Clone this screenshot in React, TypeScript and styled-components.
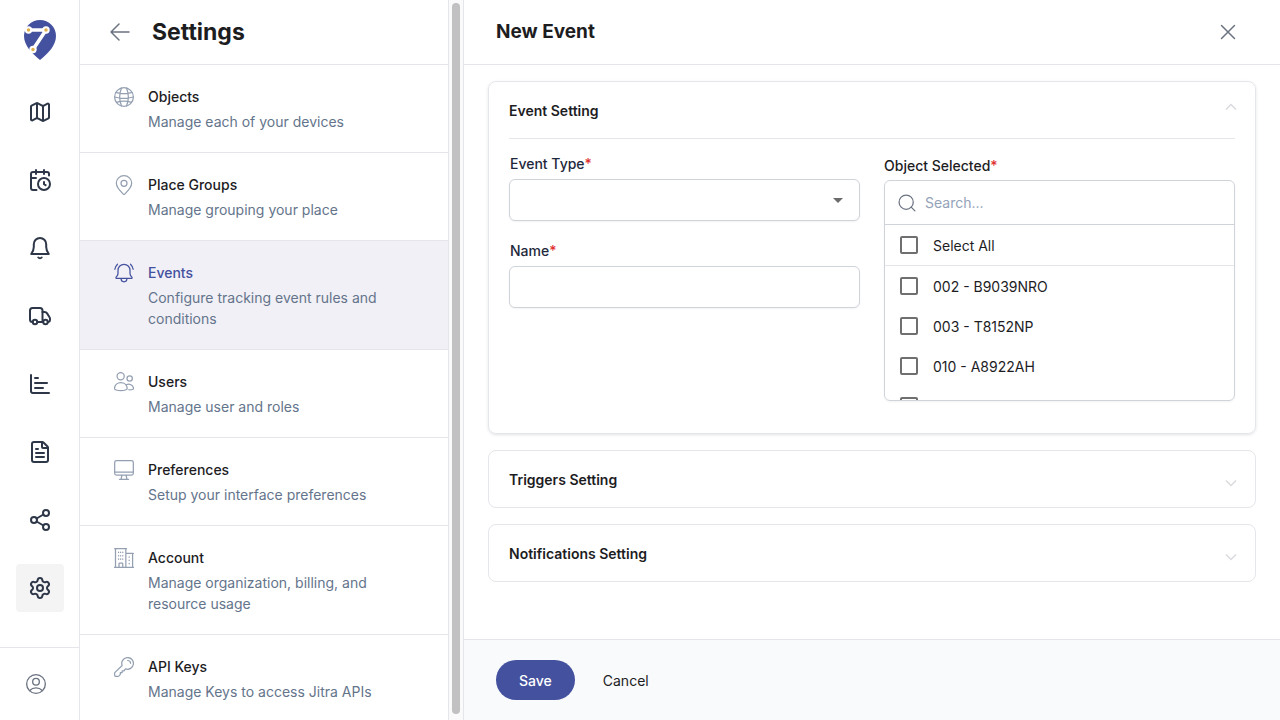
import React from "react";
import styled, { createGlobalStyle } from "styled-components";
import { CalendarClock, ChartBar, FileText, Map, Settings, Share2 } from "lucide-react";

const brand = "#44519e";
const line = "#e4e6ea";
const ink = "#1d1d1f";

const GlobalStyle = createGlobalStyle`
  *, *::before, *::after { box-sizing: border-box; }
  body { margin: 0; background: #fff; }
  body, button, input, select {
    font-family: Inter, "Liberation Sans", sans-serif;
    font-size: 14px;
    color: ${ink};
  }
  h1, h2, h3, p { margin: 0; }
  a { text-decoration: none; color: inherit; }
  button { border: 0; background: none; padding: 0; cursor: pointer; }
`;

const Shell = styled.div`
  display: flex;
  height: 100vh;
  overflow: hidden;
`;

/* Navigation rail */
const Rail = styled.nav`
  display: flex;
  flex-direction: column;
  flex: none;
  width: 80px;
  border-right: 1px solid ${line};
`;
const LogoLink = styled.a`
  display: flex;
  padding: 20px 0 0 24px;
  height: 88px;
  flex: none;
`;
const RailList = styled.div`
  display: flex;
  flex-direction: column;
  gap: 20px;
  padding-left: 16px;
  flex: 1;
`;
const RailLink = styled.a<{ $active?: boolean }>`
  display: flex;
  align-items: center;
  justify-content: center;
  width: 48px;
  height: 48px;
  border-radius: 4px;
  color: #2d3748;
  background: ${(p) => (p.$active ? "#f4f4f5" : "transparent")};
`;
const RailFooter = styled.div`
  display: flex;
  align-items: center;
  padding-left: 26px;
  height: 73px;
  flex: none;
  border-top: 1px solid ${line};
  color: #5f6673;
`;
const IconButton = styled.button`
  display: flex;
  align-items: center;
  justify-content: center;
  color: #6b7280;
`;

/* Settings list */
const Sidebar = styled.aside`
  display: flex;
  flex: none;
  width: 384px;
  border-right: 1px solid ${line};
`;
const SidebarBody = styled.div`
  flex: 1;
  min-width: 0;
  overflow: hidden;
  border-right: 1px solid ${line};
`;
const ScrollTrack = styled.div`
  width: 14px;
  padding: 3px 3px 6px;
  background: #fafafa;
  display: flex;
`;
const ScrollThumb = styled.div`
  flex: 1;
  border-radius: 4px;
  background: #c1c1c1;
`;
const SidebarHeader = styled.header`
  display: flex;
  align-items: center;
  gap: 20px;
  height: 65px;
  padding: 0 28px;
  border-bottom: 1px solid ${line};
`;
const SidebarTitle = styled.h1`
  font-size: 23px;
  line-height: 32px;
  font-weight: 700;
`;
const SettingLink = styled.a<{ $active?: boolean }>`
  display: flex;
  gap: 12px;
  padding: 20px 32px;
  border-bottom: 1px solid ${line};
  background: ${(p) => (p.$active ? "#f1f0f6" : "#fff")};
  color: ${(p) => (p.$active ? brand : "#94a0b2")};
`;
const SettingIcon = styled.span`
  display: flex;
  align-items: center;
  justify-content: center;
  flex: none;
  width: 24px;
  height: 24px;
`;
const SettingText = styled.span`
  display: flex;
  flex-direction: column;
  gap: 2px;
`;
const SettingName = styled.span<{ $active?: boolean }>`
  line-height: 24px;
  font-weight: 500;
  color: ${(p) => (p.$active ? brand : ink)};
`;
const SettingNote = styled.span`
  line-height: 21px;
  color: #64748b;
`;

/* Event form */
const Panel = styled.main`
  display: flex;
  flex-direction: column;
  flex: 1;
  min-width: 0;
`;
const PanelHeader = styled.header`
  display: flex;
  align-items: center;
  justify-content: space-between;
  flex: none;
  height: 65px;
  padding: 0 40px 0 32px;
  border-bottom: 1px solid ${line};
`;
const PanelTitle = styled.h2`
  font-size: 19px;
  line-height: 28px;
  font-weight: 700;
`;
const PanelBody = styled.div`
  display: flex;
  flex-direction: column;
  gap: 16px;
  flex: 1;
  min-height: 0;
  padding: 16px 24px;
`;
const Card = styled.section<{ $open?: boolean }>`
  border: 1px solid ${line};
  border-radius: 8px;
  padding: 0 20px;
  box-shadow: ${(p) => (p.$open ? "0 1px 3px rgba(15, 23, 42, 0.12)" : "none")};
`;
const CardToggle = styled.button`
  display: flex;
  align-items: center;
  justify-content: space-between;
  width: 100%;
  height: 56px;
  font-weight: 600;
`;
const ChevronSlot = styled.span<{ $open?: boolean }>`
  display: flex;
  width: 12px;
  margin-right: -2px;
  padding: ${(p) => (p.$open ? "0 0 6px" : "8px 0 0")};
  color: #d9dbdf;
`;
const FormGrid = styled.div`
  display: grid;
  grid-template-columns: 1fr 1fr;
  gap: 24px;
  border-top: 1px solid ${line};
  padding: 15px 0 32px;
`;
const FieldStack = styled.div`
  display: flex;
  flex-direction: column;
  gap: 20px;
`;
const Field = styled.div`
  display: flex;
  flex-direction: column;
  gap: 6px;
`;
const Label = styled.label`
  padding-left: 1px;
  line-height: 19px;
  font-weight: 500;
  color: #1e293b;
`;
const Required = styled.span`
  color: #e03131;
`;
const TextInput = styled.input`
  width: 100%;
  height: 42px;
  padding: 0 12px;
  border: 1px solid #cfd3da;
  border-radius: 6px;
  background: #fff;
  outline: none;
  box-shadow: 0 1px 2px rgba(15, 23, 42, 0.05);
`;
const SelectWrap = styled.div`
  position: relative;
`;
const SelectInput = styled(TextInput).attrs({ as: "select" })`
  display: block;
  appearance: none;
`;
const SelectArrow = styled.svg`
  position: absolute;
  right: 17px;
  top: 19px;
  pointer-events: none;
`;
const ObjectField = styled.fieldset`
  display: flex;
  flex-direction: column;
  gap: 2px;
  min-width: 0;
  margin: 0;
  padding: 0;
  border: 0;
`;
const ObjectLabel = styled.label`
  line-height: 24px;
  font-weight: 500;
`;
const Picker = styled.div`
  border: 1px solid #cfd3da;
  border-radius: 6px;
  overflow: hidden;
  box-shadow: 0 1px 2px rgba(15, 23, 42, 0.05);
`;
const SearchRow = styled.div`
  display: flex;
  align-items: center;
  gap: 8px;
  height: 44px;
  padding: 0 12px;
  border-bottom: 1px solid #cfd3da;
  color: #6b7280;
`;
const SearchInput = styled.input`
  flex: 1;
  min-width: 0;
  border: 0;
  padding: 0;
  outline: none;
  background: none;
  &::placeholder { color: #94a3b8; opacity: 1; }
`;
const Option = styled.label<{ $divided?: boolean }>`
  display: flex;
  align-items: center;
  gap: 15px;
  height: ${(p) => (p.$divided ? 41 : 40)}px;
  padding: 0 15px;
  border-bottom: ${(p) => (p.$divided ? `1px solid ${line}` : "0")};
`;
const Tick = styled.input`
  appearance: none;
  flex: none;
  width: 18px;
  height: 18px;
  margin: 0;
  border: 2px solid #6f6f6f;
  border-radius: 2px;
  &:checked { background: ${brand}; }
`;
const OptionList = styled.div`
  height: 134px;
  overflow: hidden;
`;
const PanelFooter = styled.footer`
  display: flex;
  align-items: center;
  gap: 16px;
  flex: none;
  padding: 20px 32px;
  border-top: 1px solid ${line};
  background: #f8fafc;
`;
const SaveButton = styled.button`
  height: 40px;
  padding: 0 23px;
  border-radius: 20px;
  background: ${brand};
  color: #fff;
  font-weight: 500;
`;
const CancelButton = styled.button`
  height: 40px;
  padding: 0 12px;
`;

const Glyph = ({ size = 20, width = 2, children }: { size?: number; width?: number; children: React.ReactNode }) => (
  <svg
    width={size}
    height={size}
    viewBox="0 0 24 24"
    fill="none"
    stroke="currentColor"
    strokeWidth={width}
    strokeLinecap="round"
    strokeLinejoin="round"
    aria-hidden="true"
  >
    {children}
  </svg>
);

const Logo = () => (
  <svg width="32" height="40" viewBox="0 0 32 40" aria-hidden="true">
    <path d="M16 0C25 0 32 7 32 16c0 9.500-8 17.500-16 24C8 33.500 0 25.500 0 16 0 7 7 0 16 0z" fill={brand} />
    <path d="M4.500 10H22L9 29.500" fill="none" stroke="#fff" strokeWidth="3.600" strokeLinejoin="round" />
    {[[4.5, 10], [22, 10], [9, 29.5]].map(([x, y]) => (
      <g key={`${x}-${y}`}>
        <circle cx={x} cy={y} r="3.700" fill="#fff" />
        <circle cx={x} cy={y} r="1.700" fill="#e0b04e" />
      </g>
    ))}
  </svg>
);

const navItems = [
  { name: "Map", icon: <Map size={24} strokeWidth={2} /> },
  { name: "Schedule", icon: <CalendarClock size={24} strokeWidth={2} /> },
  {
    name: "Alerts",
    icon: (
      <Glyph size={24}>
        <path d="M12 2a6.200 6.200 0 0 0-6.200 6.200V11c0 2.600-.8 4.600-2.600 7h17.600c-1.800-2.400-2.600-4.400-2.600-7V8.200A6.200 6.200 0 0 0 12 2z" />
        <path d="M10.300 21.500c.8 1 2.600 1 3.400 0" />
      </Glyph>
    ),
  },
  {
    name: "Vehicles",
    icon: (
      <Glyph size={24}>
        <path d="M4.500 18A2.500 2.500 0 0 1 2 15.500v-9A2.500 2.500 0 0 1 4.500 4H12a2.500 2.500 0 0 1 2.500 2.500V18H9.500" />
        <path d="M14.500 8h2a3 3 0 0 1 2.600 1.400l2.400 3.800c.3.500.5 1 .5 1.600V16a2 2 0 0 1-1.600 2" />
        <circle cx="7" cy="18" r="2.200" />
        <circle cx="17.500" cy="18" r="2.200" />
      </Glyph>
    ),
  },
  { name: "Charts", icon: <ChartBar size={24} strokeWidth={2} /> },
  { name: "Reports", icon: <FileText size={24} strokeWidth={2} /> },
  {
    name: "Share",
    icon: <Share2 size={24} strokeWidth={2} />,
  },
  { name: "Settings", icon: <Settings size={24} strokeWidth={2} />, active: true },
];

const settings = [
  {
    name: "Objects",
    note: "Manage each of your devices",
    icon: (
      <>
        <circle cx="12" cy="12" r="11.250" />
        <path d="M9 1.200C6.200 8 6.200 16 9 22.800M15 1.200C17.800 8 17.800 16 15 22.800M2.300 6.500c6 1.900 13.400 1.900 19.400 0M.8 12c6.900 2 15.500 2 22.400 0M3 18.500c5.600-1.900 12.400-1.900 18 0" />
      </>
    ),
  },
  {
    name: "Place Groups",
    note: "Manage grouping your place",
    icon: (
      <>
        <path d="M12 .8a9.200 9.200 0 0 1 9.200 9.200c0 4.300-6 10.700-8.300 12.900a1.300 1.300 0 0 1-1.800 0C8.800 20.700 2.800 14.300 2.800 10A9.200 9.200 0 0 1 12 .8z" />
        <circle cx="12" cy="10" r="3.600" />
      </>
    ),
  },
  {
    name: "Events",
    note: "Configure tracking event rules and conditions",
    active: true,
    icon: (
      <>
        <path d="M12 1.500A7.200 7.200 0 0 0 4.800 8.700v3.800c0 1.700-.9 3-2 4.200-.8.900-.5 1.800.6 1.800h17.200c1.100 0 1.400-.9.600-1.800-1.100-1.200-2-2.500-2-4.200V8.700A7.200 7.200 0 0 0 12 1.500z" />
        <path d="M8.500 19a3.500 3.500 0 0 0 7 0M4.200 1.500A11 11 0 0 0 1 7.500M19.800 1.500A11 11 0 0 1 23 7.500" />
      </>
    ),
  },
  {
    name: "Users",
    note: "Manage user and roles",
    icon: (
      <>
        <circle cx="8" cy="5" r="4.300" />
        <circle cx="18.800" cy="7.800" r="3.200" />
        <path d="M8.200 12.700c4.100 0 7.300 3 7.700 7.100.1 1.400-3.500 2.600-7.700 2.600S.3 21.200.5 19.800c.5-4.100 3.600-7.100 7.700-7.100z" />
        <path d="M14.800 15.300a6 6 0 0 1 8.700 4.500c.1 1-2.700 1.700-5.700 1.500" />
      </>
    ),
  },
  {
    name: "Preferences",
    note: "Setup your interface preferences",
    icon: <path d="M3 .8h18a2.200 2.200 0 0 1 2.200 2.200v13a2.200 2.200 0 0 1-2.200 2.200H3A2.200 2.200 0 0 1 .8 16V3A2.200 2.200 0 0 1 3 .8zM.8 14.500h22.400M9.500 18.300 8.500 23M14.500 18.300l1 4.700M6.500 23.200h11" />,
  },
  {
    name: "Account",
    note: "Manage organization, billing, and resource usage",
    icon: (
      <>
        <path d="M.5 23.200h23M1.800 23V1M.8.800H15M14.200 1v22M14.200 6.500h9M22.300 6.500V23M6 23v-4a1 1 0 0 1 1-1h2.500a1 1 0 0 1 1 1v4" />
        <path d="M5.500 5v.5M8 5v.5M10.500 5v.5M5.500 9v.5M8 9v.5M10.500 9v.5M5.500 13v.5M8 13v.5M10.500 13v.5M18.200 10.500v.5M18.200 14.500v.5M18.200 18.500v.5" />
      </>
    ),
  },
  {
    name: "API Keys",
    note: "Manage Keys to access Jitra APIs",
    icon: (
      <>
        <path d="M9.800 10.200A7 7 0 1 1 13.800 14.200L12 16.500H9.800v2.200H7.600v2.200L6 22.600c-.4.400-.7.600-1.200.6h-3a1 1 0 0 1-1-1v-2.700c0-.4.100-.7.400-1z" />
        <path d="M16.500 4.200a3.500 3.500 0 0 1 3.400 3.400" />
      </>
    ),
  },
];

const objects = ["002 - B9039NRO", "003 - T8152NP", "010 - A8922AH"];

const Chevron = ({ open }: { open?: boolean }) => (
  <ChevronSlot $open={open}>
    <svg width="12" height="8" viewBox="0 0 12 8" fill="none" stroke="currentColor" strokeWidth="1.500" aria-hidden="true">
      <path d={open ? "M1 6.500 6 1.500l5 5" : "M1 1.500l5 5 5-5"} />
    </svg>
  </ChevronSlot>
);

export default function App() {
  return (
    <Shell>
      <GlobalStyle />
      <Rail aria-label="Main">
        <LogoLink href="#" aria-label="Home">
          <Logo />
        </LogoLink>
        <RailList>
          {navItems.map((item) => (
            <RailLink key={item.name} href="#" aria-label={item.name} $active={item.active}>
              {item.icon}
            </RailLink>
          ))}
        </RailList>
        <RailFooter>
          <IconButton type="button" aria-label="Profile">
            <Glyph width={1.6}>
              <circle cx="12" cy="12" r="11.200" />
              <circle cx="12" cy="9.300" r="4" />
              <path d="M4.500 19.800c4-4.100 11-4.100 15 0" />
            </Glyph>
          </IconButton>
        </RailFooter>
      </Rail>

      <Sidebar>
        <SidebarBody>
          <SidebarHeader>
            <IconButton type="button" aria-label="Back">
              <Glyph size={24} width={1.5}>
                <path d="M21 12H3M11 4l-8 8 8 8" />
              </Glyph>
            </IconButton>
            <SidebarTitle>Settings</SidebarTitle>
          </SidebarHeader>
          {settings.map((item) => (
            <SettingLink key={item.name} href="#" $active={item.active}>
              <SettingIcon>
                <Glyph width={1.5}>{item.icon}</Glyph>
              </SettingIcon>
              <SettingText>
                <SettingName $active={item.active}>{item.name}</SettingName>
                <SettingNote>{item.note}</SettingNote>
              </SettingText>
            </SettingLink>
          ))}
        </SidebarBody>
        <ScrollTrack>
          <ScrollThumb />
        </ScrollTrack>
      </Sidebar>

      <Panel>
        <PanelHeader>
          <PanelTitle>New Event</PanelTitle>
          <IconButton type="button" aria-label="Close">
            <Glyph size={24} width={1.5}>
              <path d="M5.500 5.500l13 13M18.500 5.500l-13 13" />
            </Glyph>
          </IconButton>
        </PanelHeader>
        <PanelBody>
          <Card $open>
            <CardToggle type="button" aria-expanded="true">
              Event Setting
              <Chevron open />
            </CardToggle>
            <FormGrid>
              <FieldStack>
                <Field>
                  <Label htmlFor="event-type">
                    Event Type<Required>*</Required>
                  </Label>
                  <SelectWrap>
                    <SelectInput id="event-type" />
                    <SelectArrow width="10" height="5" viewBox="0 0 10 5" aria-hidden="true">
                      <path d="M0 0h10L5 5z" fill="#6b6b6b" />
                    </SelectArrow>
                  </SelectWrap>
                </Field>
                <Field>
                  <Label htmlFor="event-name">
                    Name<Required>*</Required>
                  </Label>
                  <TextInput id="event-name" type="text" />
                </Field>
              </FieldStack>
              <ObjectField>
                <ObjectLabel htmlFor="object-search">
                  Object Selected<Required>*</Required>
                </ObjectLabel>
                <Picker>
                  <SearchRow>
                    <Glyph width={1.5}>
                      <circle cx="11" cy="11" r="8.500" />
                      <path d="M17 17l4.500 4.500" />
                    </Glyph>
                    <SearchInput id="object-search" type="text" placeholder="Search..." />
                  </SearchRow>
                  <Option $divided>
                    <Tick type="checkbox" />
                    Select All
                  </Option>
                  <OptionList>
                    {objects.map((name) => (
                      <Option key={name}>
                        <Tick type="checkbox" />
                        {name}
                      </Option>
                    ))}
                    <Option>
                      <Tick type="checkbox" aria-label="Object" />
                    </Option>
                  </OptionList>
                </Picker>
              </ObjectField>
            </FormGrid>
          </Card>
          <Card>
            <CardToggle type="button" aria-expanded="false">
              Triggers Setting
              <Chevron />
            </CardToggle>
          </Card>
          <Card>
            <CardToggle type="button" aria-expanded="false">
              Notifications Setting
              <Chevron />
            </CardToggle>
          </Card>
        </PanelBody>
        <PanelFooter>
          <SaveButton type="button">Save</SaveButton>
          <CancelButton type="button">Cancel</CancelButton>
        </PanelFooter>
      </Panel>
    </Shell>
  );
}
